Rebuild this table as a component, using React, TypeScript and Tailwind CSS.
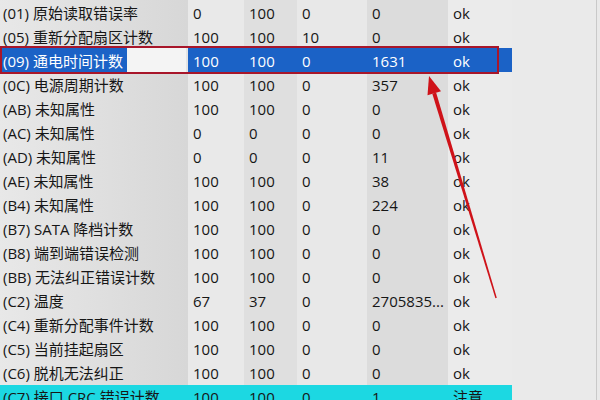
import React from "react";

type Row = {
  name: string;
  cur: string;
  worst: string;
  thr: string;
  raw: string;
  status: string;
};

const rows: Row[] = [
  { name: "(01) 原始读取错误率", cur: "0", worst: "100", thr: "0", raw: "0", status: "ok" },
  { name: "(05) 重新分配扇区计数", cur: "100", worst: "100", thr: "10", raw: "0", status: "ok" },
  { name: "(09) 通电时间计数", cur: "100", worst: "100", thr: "0", raw: "1631", status: "ok" },
  { name: "(0C) 电源周期计数", cur: "100", worst: "100", thr: "0", raw: "357", status: "ok" },
  { name: "(AB) 未知属性", cur: "100", worst: "100", thr: "0", raw: "0", status: "ok" },
  { name: "(AC) 未知属性", cur: "0", worst: "0", thr: "0", raw: "0", status: "ok" },
  { name: "(AD) 未知属性", cur: "0", worst: "0", thr: "0", raw: "11", status: "ok" },
  { name: "(AE) 未知属性", cur: "100", worst: "100", thr: "0", raw: "38", status: "ok" },
  { name: "(B4) 未知属性", cur: "100", worst: "100", thr: "0", raw: "224", status: "ok" },
  { name: "(B7) SATA 降档计数", cur: "100", worst: "100", thr: "0", raw: "0", status: "ok" },
  { name: "(B8) 端到端错误检测", cur: "100", worst: "100", thr: "0", raw: "0", status: "ok" },
  { name: "(BB) 无法纠正错误计数", cur: "100", worst: "100", thr: "0", raw: "0", status: "ok" },
  { name: "(C2) 温度", cur: "67", worst: "37", thr: "0", raw: "2705835...", status: "ok" },
  { name: "(C4) 重新分配事件计数", cur: "100", worst: "100", thr: "0", raw: "0", status: "ok" },
  { name: "(C5) 当前挂起扇区", cur: "100", worst: "100", thr: "0", raw: "0", status: "ok" },
  { name: "(C6) 脱机无法纠正", cur: "100", worst: "100", thr: "0", raw: "0", status: "ok" },
  { name: "(C7) 接口 CRC 错误计数", cur: "100", worst: "100", thr: "0", raw: "1", status: "注意" },
];

const font = { fontFamily: '"Open Sans", "Noto Sans CJK SC", sans-serif' };

function ValueCells({ row, bgs }: { row: Row; bgs: string[] }) {
  const vals = [row.cur, row.worst, row.thr, row.raw, row.status];
  return (
    <>
      {vals.map((v, i) => (
        <div key={i} className={`flex items-center pl-[5px] pt-[2px] whitespace-nowrap overflow-hidden ${bgs[i]}`}>
          {v}
        </div>
      ))}
    </>
  );
}

const stripes = ["bg-[#e9e9e9]", "bg-[#dfdfdf]", "bg-[#e8e8e8]", "bg-[#dcdcdc]", "bg-[#ebebeb]"];

export default function App() {
  return (
    <div className="relative w-[600px] h-[400px] overflow-hidden bg-[#e9e9e9] text-[15px] text-[#161616]" style={font}>
      <div className="flex">
        <div className="w-[512px]">
          {rows.map((row, idx) => {
            if (idx === 2) {
              return (
                <div key={row.name} className="grid grid-cols-[188px_56px_53px_70px_81px_64px] h-[24px] text-white">
                  <div className="flex bg-[#e4e4e4]">
                    <div className="flex items-center pl-[3px] pr-[4px] pt-[2px] bg-[#1b62c6] whitespace-nowrap">{row.name}</div>
                    <div className="flex-1 bg-[#f4f4f4] mr-[2px]" />
                  </div>
                  <ValueCells row={row} bgs={["bg-[#1b62c6]", "bg-[#1b62c6]", "bg-[#1b62c6]", "bg-[#1b62c6]", "bg-[#1b62c6]"]} />
                </div>
              );
            }
            if (idx === rows.length - 1) {
              return (
                <div key={row.name} className="grid grid-cols-[188px_56px_53px_70px_81px_64px] h-[24px] bg-[#1cd8e2]">
                  <div className="flex items-center pl-[3px] pt-[2px] whitespace-nowrap">{row.name}</div>
                  <ValueCells row={row} bgs={["", "", "", "", ""]} />
                </div>
              );
            }
            return (
              <div key={row.name} className="grid grid-cols-[188px_56px_53px_70px_81px_64px] h-[24px]">
                <div className="flex items-center pl-[3px] pt-[2px] whitespace-nowrap bg-gradient-to-r from-[#e8e8e8] to-[#d7d7d7]">
                  {row.name}
                </div>
                <ValueCells row={row} bgs={stripes} />
              </div>
            );
          })}
        </div>
        <div className="flex-1 h-[400px] bg-[#eaeaea] border-r-[1px] border-[#c9c9c9] mr-[3px]" />
      </div>

      {/* red annotation box around the selected row */}
      <div className="absolute left-0 top-[46px] w-[499px] h-[28px] border-2 border-[#a8162a]" />

      {/* arrow */}
      <svg className="absolute left-0 top-0" width="600" height="400" viewBox="0 0 600 400">
        <polygon points="436.1,92.6 432.3,93.8 495.4,298.2 496.8,297.8" fill="#cf1219" />
        <polygon points="429,76 441,91.2 427.5,95.2" fill="#cf1219" />
      </svg>
    </div>
  );
}
